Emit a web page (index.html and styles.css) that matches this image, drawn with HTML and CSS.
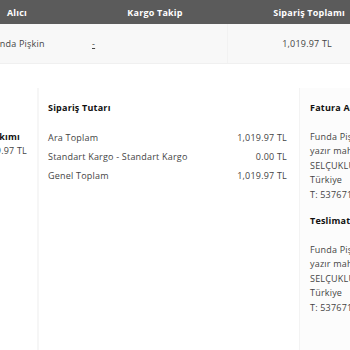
FILE: index.html
```html
<!DOCTYPE html>
<html lang="tr">
<head>
<meta charset="utf-8">
<link rel="stylesheet" href="styles.css">
</head>
<body>
<div class="page">
  <div class="orders">
    <div class="thead">
      <div class="th th-buyer">Alıcı</div>
      <div class="th th-cargo">Kargo Takip</div>
      <div class="th th-total">Sipariş Toplamı</div>
    </div>
    <div class="trow">
      <div class="td td-buyer">Funda Pişkin</div>
      <div class="td td-cargo"><a class="link" href="#">-</a></div>
      <div class="td td-total">1,019.97 TL</div>
    </div>
  </div>

  <div class="details">
    <div class="col col-pay">
      <div class="label">Ödeme Bakımı</div>
      <div class="text">1,019.97 TL</div>
    </div>
    <div class="col col-sum">
      <div class="heading">Sipariş Tutarı</div>
      <div class="sum-row"><span>Ara Toplam</span><span>1,019.97 TL</span></div>
      <div class="sum-row"><span>Standart Kargo - Standart Kargo</span><span>0.00 TL</span></div>
      <div class="sum-row"><span>Genel Toplam</span><span>1,019.97 TL</span></div>
    </div>
    <div class="col col-addr">
      <div class="heading">Fatura Adresi</div>
      <div class="address">
        <div>Funda Pişkin</div>
        <div>yazır mahallesi</div>
        <div>SELÇUKLU/KONYA</div>
        <div>Türkiye</div>
        <div>T: 5376711000</div>
      </div>
      <div class="heading">Teslimat Adresi</div>
      <div class="address">
        <div>Funda Pişkin</div>
        <div>yazır mahallesi</div>
        <div>SELÇUKLU/KONYA</div>
        <div>Türkiye</div>
        <div>T: 5376711000</div>
      </div>
    </div>
  </div>
</div>
</body>
</html>
```

FILE: styles.css
```css
* { box-sizing: border-box; }
html, body {
  margin: 0;
  padding: 0;
  background: #ffffff;
  overflow: hidden;
}
body {
  font-family: "Open Sans", "Liberation Sans", sans-serif;
  font-size: 9px;
  letter-spacing: 0.2px;
  color: #444444;
  width: 350px;
  height: 350px;
}
.page {
  width: 350px;
  height: 350px;
  overflow: hidden;
}
.orders {
  margin-left: -12px;
  width: 362px;
}
.thead {
  display: grid;
  grid-template-columns: 58px 218px 1fr;
  height: 24px;
  align-items: center;
  background: #5b5b5b;
  color: #ffffff;
  font-weight: 700;
  font-size: 9px;
}
.th-buyer { text-align: center; }
.th-cargo { text-align: center; }
.th-total { text-align: right; padding-right: 5px; }
.trow {
  display: grid;
  grid-template-columns: 58px 182px 1fr;
  height: 40px;
  align-items: center;
  background: #f8f8f8;
  border-bottom: 1px solid #f0f0f0;
}
.td-buyer { text-align: center; white-space: nowrap; }
.td-cargo { padding-left: 46px; height: 100%; display: flex; align-items: center; border-right: 1px solid #f2f2f2; }
.td-total { text-align: right; padding-right: 18px; }
.link { color: #444444; text-decoration: underline; }

.details {
  display: grid;
  grid-template-columns: 120px 260px 1fr;
  margin-left: -81px;
  margin-top: 24px;
  height: 262px;
}
.col {
  padding-top: 13px;
}
.col-pay {
  padding-top: 42px;
  border-right: 2px solid #f6f6f6;
  line-height: 14px;
  text-align: right;
  white-space: nowrap;
}
.col-pay .label { font-weight: 700; color: #111111; padding-right: 17px; }
.col-pay .text { padding-right: 10px; }
.col-sum {
  padding-left: 9px;
  padding-right: 12px;
}
.col-addr {
  padding-left: 10px;
  background: #fcfcfc;
  border-left: 1px solid #f3f3f3;
  white-space: nowrap;
  overflow: hidden;
}
.heading {
  font-weight: 700;
  color: #111111;
  line-height: 14px;
}
.col-sum .heading { margin-bottom: 12.5px; }
.sum-row {
  display: flex;
  justify-content: space-between;
  line-height: 19px;
}
.address {
  line-height: 14.5px;
  margin-top: 14.75px;
  margin-bottom: 11.75px;
}
```
